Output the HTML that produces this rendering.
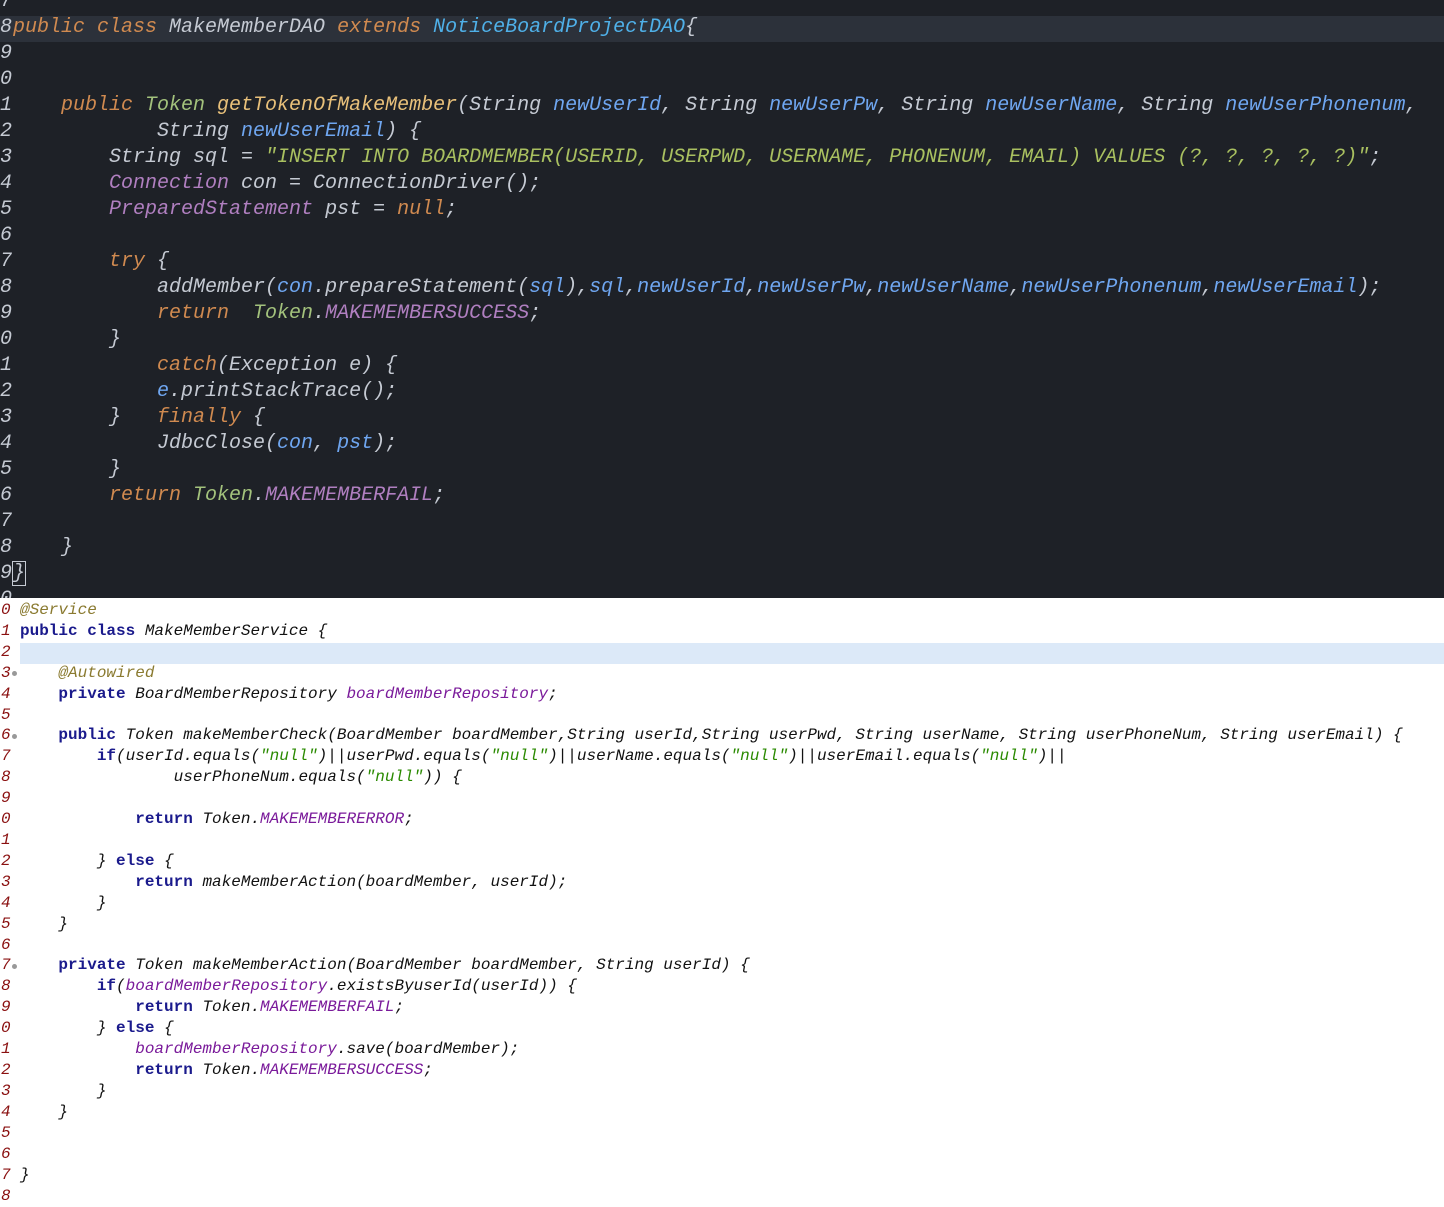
<!DOCTYPE html>
<html><head><meta charset="utf-8"><style>
body{margin:0;width:1444px;height:1207px;overflow:hidden;background:#fff;position:relative}
#top{position:absolute;left:0;top:0;width:1444px;height:598px;background:#1e2127;overflow:hidden}
.t{position:absolute;left:0;height:26px;line-height:26px;font:italic 20px "Liberation Mono",monospace;white-space:pre;color:#c5cad3;width:1444px}
.t .n{color:#c5cad3;display:inline-block;width:13px}
.k{color:#d08a50}.g{color:#a3c27c}.y{color:#e8c07a}.b{color:#6fa6f0}.p{color:#b07fc0}.s{color:#a9c060}.c{color:#4fb0e8}
#bot{position:absolute;left:0;top:598px;width:1444px;height:609px;background:#fff;overflow:hidden}
.l{position:absolute;left:0;height:21px;line-height:21px;font:italic 16px "Liberation Mono",monospace;white-space:pre;color:#111;width:1444px}
.l .n{color:#8a1010;display:inline-block;width:20px;padding-left:1px;box-sizing:border-box}
.K{color:#1a1a8c;font-weight:bold;font-style:normal}.S{color:#2a8a00}.F{color:#7a1a9a}.A{color:#8a7a30}
.dot{position:absolute;left:12px;width:5px;height:5px;border-radius:50%;background:#999}
</style></head><body>
<div id="top">
<div class="t" style="top:-10px"><span class="n">7</span></div>
<div class="t" style="top:16px;background:#2c313a"><span class="n">8</span><span class="k">public class </span>MakeMemberDAO <span class="k">extends </span><span class="c">NoticeBoardProjectDAO</span>{</div>
<div class="t" style="top:42px"><span class="n">9</span></div>
<div class="t" style="top:68px"><span class="n">0</span></div>
<div class="t" style="top:94px"><span class="n">1</span>    <span class="k">public </span><span class="g">Token </span><span class="y">getTokenOfMakeMember</span>(String <span class="b">newUserId</span>, String <span class="b">newUserPw</span>, String <span class="b">newUserName</span>, String <span class="b">newUserPhonenum</span>,</div>
<div class="t" style="top:120px"><span class="n">2</span>            String <span class="b">newUserEmail</span>) {</div>
<div class="t" style="top:146px"><span class="n">3</span>        String sql = <span class="s">"INSERT INTO BOARDMEMBER(USERID, USERPWD, USERNAME, PHONENUM, EMAIL) VALUES (?, ?, ?, ?, ?)"</span>;</div>
<div class="t" style="top:172px"><span class="n">4</span>        <span class="p">Connection </span>con = ConnectionDriver();</div>
<div class="t" style="top:198px"><span class="n">5</span>        <span class="p">PreparedStatement </span>pst = <span class="k">null</span>;</div>
<div class="t" style="top:224px"><span class="n">6</span></div>
<div class="t" style="top:250px"><span class="n">7</span>        <span class="k">try </span>{</div>
<div class="t" style="top:276px"><span class="n">8</span>            addMember(<span class="b">con</span>.prepareStatement(<span class="b">sql</span>),<span class="b">sql</span>,<span class="b">newUserId</span>,<span class="b">newUserPw</span>,<span class="b">newUserName</span>,<span class="b">newUserPhonenum</span>,<span class="b">newUserEmail</span>);</div>
<div class="t" style="top:302px"><span class="n">9</span>            <span class="k">return  </span><span class="g">Token</span>.<span class="p">MAKEMEMBERSUCCESS</span>;</div>
<div class="t" style="top:328px"><span class="n">0</span>        }</div>
<div class="t" style="top:354px"><span class="n">1</span>            <span class="k">catch</span>(Exception e) {</div>
<div class="t" style="top:380px"><span class="n">2</span>            <span class="b">e</span>.printStackTrace();</div>
<div class="t" style="top:406px"><span class="n">3</span>        }   <span class="k">finally </span>{</div>
<div class="t" style="top:432px"><span class="n">4</span>            JdbcClose(<span class="b">con</span>, <span class="b">pst</span>);</div>
<div class="t" style="top:458px"><span class="n">5</span>        }</div>
<div class="t" style="top:484px"><span class="n">6</span>        <span class="k">return </span><span class="g">Token</span>.<span class="p">MAKEMEMBERFAIL</span>;</div>
<div class="t" style="top:510px"><span class="n">7</span></div>
<div class="t" style="top:536px"><span class="n">8</span>    }</div>
<div class="t" style="top:562px"><span class="n">9</span><span style="outline:1px solid #c5cad3">}</span></div>
<div class="t" style="top:588px"><span class="n">0</span></div>
</div>
<div id="bot">
<div class="l" style="top:3px"><span class="n">0</span><span class="A">@Service</span></div>
<div class="l" style="top:24px"><span class="n">1</span><span class="K">public class </span>MakeMemberService {</div>
<div class="l" style="top:45px"><span class="n">2</span><span style="position:absolute;left:20px;top:0;width:1424px;height:21px;background:#dce9f8"></span></div>
<div class="l" style="top:66px"><span class="n">3</span>    <span class="A">@Autowired</span></div><div class="dot" style="top:73px"></div>
<div class="l" style="top:87px"><span class="n">4</span>    <span class="K">private </span>BoardMemberRepository <span class="F">boardMemberRepository</span>;</div>
<div class="l" style="top:108px"><span class="n">5</span></div>
<div class="l" style="top:128px"><span class="n">6</span>    <span class="K">public </span>Token makeMemberCheck(BoardMember boardMember,String userId,String userPwd, String userName, String userPhoneNum, String userEmail) {</div><div class="dot" style="top:136px"></div>
<div class="l" style="top:149px"><span class="n">7</span>        <span class="K">if</span>(userId.equals(<span class="S">"null"</span>)||userPwd.equals(<span class="S">"null"</span>)||userName.equals(<span class="S">"null"</span>)||userEmail.equals(<span class="S">"null"</span>)||</div>
<div class="l" style="top:170px"><span class="n">8</span>                userPhoneNum.equals(<span class="S">"null"</span>)) {</div>
<div class="l" style="top:191px"><span class="n">9</span></div>
<div class="l" style="top:212px"><span class="n">0</span>            <span class="K">return </span>Token.<span class="F">MAKEMEMBERERROR</span>;</div>
<div class="l" style="top:233px"><span class="n">1</span></div>
<div class="l" style="top:254px"><span class="n">2</span>        } <span class="K">else </span>{</div>
<div class="l" style="top:275px"><span class="n">3</span>            <span class="K">return </span>makeMemberAction(boardMember, userId);</div>
<div class="l" style="top:296px"><span class="n">4</span>        }</div>
<div class="l" style="top:317px"><span class="n">5</span>    }</div>
<div class="l" style="top:338px"><span class="n">6</span></div>
<div class="l" style="top:358px"><span class="n">7</span>    <span class="K">private </span>Token makeMemberAction(BoardMember boardMember, String userId) {</div><div class="dot" style="top:366px"></div>
<div class="l" style="top:379px"><span class="n">8</span>        <span class="K">if</span>(<span class="F">boardMemberRepository</span>.existsByuserId(userId)) {</div>
<div class="l" style="top:400px"><span class="n">9</span>            <span class="K">return </span>Token.<span class="F">MAKEMEMBERFAIL</span>;</div>
<div class="l" style="top:421px"><span class="n">0</span>        } <span class="K">else </span>{</div>
<div class="l" style="top:442px"><span class="n">1</span>            <span class="F">boardMemberRepository</span>.save(boardMember);</div>
<div class="l" style="top:463px"><span class="n">2</span>            <span class="K">return </span>Token.<span class="F">MAKEMEMBERSUCCESS</span>;</div>
<div class="l" style="top:484px"><span class="n">3</span>        }</div>
<div class="l" style="top:505px"><span class="n">4</span>    }</div>
<div class="l" style="top:526px"><span class="n">5</span></div>
<div class="l" style="top:547px"><span class="n">6</span></div>
<div class="l" style="top:568px"><span class="n">7</span>}</div>
<div class="l" style="top:589px"><span class="n">8</span></div>
</div>
</body></html>
